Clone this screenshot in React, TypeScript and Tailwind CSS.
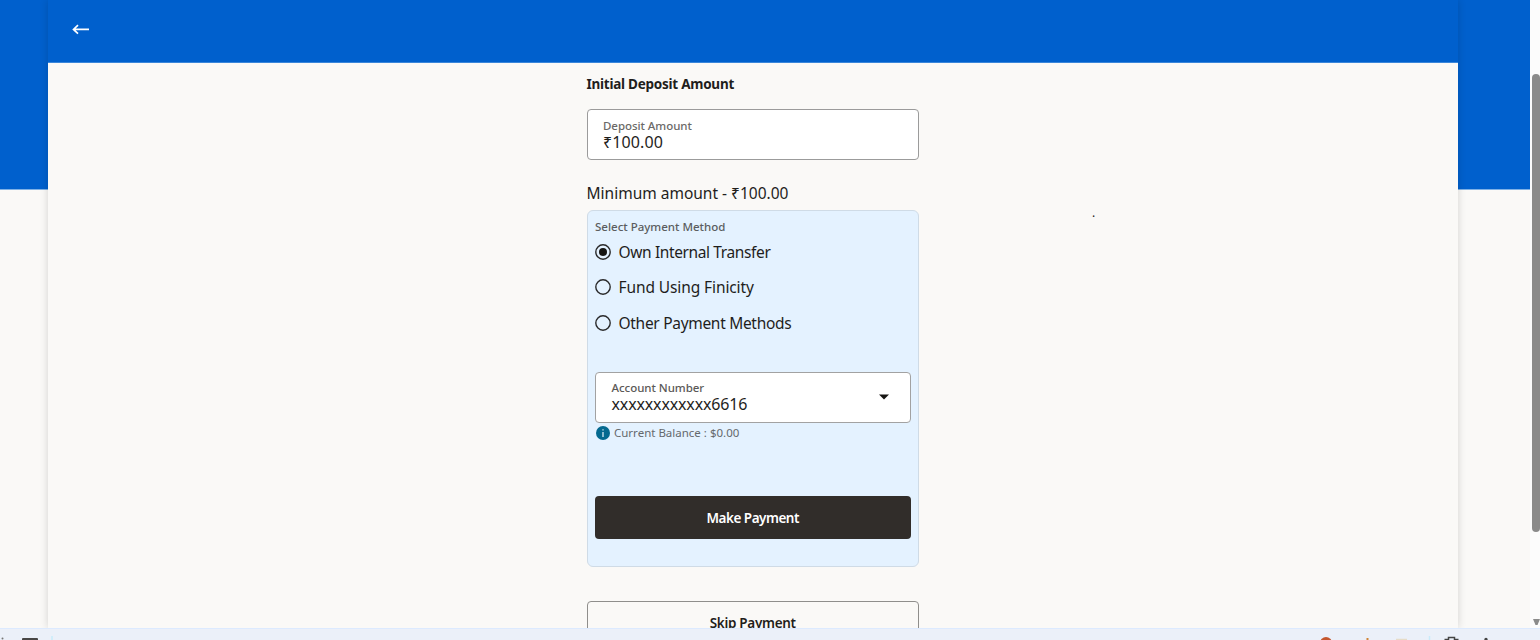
import { useState } from 'react'

interface PaymentOption {
  id: string
  label: string
  className: string
}

const paymentOptions: PaymentOption[] = [
  { id: 'internal', label: 'Own Internal Transfer', className: 'tracking-[-0.38px]' },
  { id: 'finicity', label: 'Fund Using Finicity', className: 'tracking-[-0.1px]' },
  { id: 'other', label: 'Other Payment Methods', className: 'tracking-[-0.3px]' },
]

function SideRail({ className }: { className: string }) {
  return (
    <div className={`shrink-0 ${className}`}>
      <div className="h-[190px] bg-[#0060cd] border-b border-[#7fb1e6]" />
    </div>
  )
}

function Header() {
  return (
    <header className="h-[63px] shrink-0 bg-[#0060cd] border-b border-[#3a86da] pl-6 pt-[21px]">
      <button type="button" aria-label="Back" className="block">
        <svg className="w-[18px] h-4" viewBox="0 0 18 16" fill="none" stroke="#fff" strokeWidth="1.7">
          <path d="M17 8.4H1.8M6 4.2L1.5 8.4 6 12.6" />
        </svg>
      </button>
    </header>
  )
}

function RadioRow({ option, checked, onSelect }: { option: PaymentOption; checked: boolean; onSelect: () => void }) {
  return (
    <button type="button" role="radio" aria-checked={checked} onClick={onSelect} className="flex items-center gap-[7.5px] h-[35.5px]">
      <svg className="w-4 h-4 shrink-0" viewBox="0 0 16 16" aria-hidden="true">
        <circle cx="8" cy="8" r="7.2" fill="none" stroke="#2a2a2b" strokeWidth="1.4" />
        {checked && <circle cx="8" cy="8" r="4" fill="#161513" />}
      </svg>
      <span className={`text-[15.5px] leading-5 whitespace-nowrap ${option.className}`}>{option.label}</span>
    </button>
  )
}

function PaymentCard() {
  const [selected, setSelected] = useState('internal')

  return (
    <section className="h-[357px] bg-[#e4f2ff] border border-[#cfdbe6] rounded-md px-[7.5px] pt-2 flex flex-col">
      <div className="text-[11.5px] leading-4 font-medium text-[#5b5d60]">Select Payment Method</div>
      <div role="radiogroup" className="flex flex-col items-start h-[138px] -mt-px">
        {paymentOptions.map((option) => (
          <RadioRow
            key={option.id}
            option={option}
            checked={selected === option.id}
            onSelect={() => setSelected(option.id)}
          />
        ))}
      </div>

      <div className="h-[51px] shrink-0 bg-white border border-[#a2a2a2] rounded-[4px] pl-[15.5px] pr-[21px] pb-[2px] flex items-center justify-between">
        <div className="-mt-px">
          <div className="text-[11.5px] leading-4 font-medium tracking-[-0.05px] text-[#5b5957]">Account Number</div>
          <div className="text-[16px] leading-4 tracking-[-0.15px]">xxxxxxxxxxxx6616</div>
        </div>
        <svg className="w-[10px] h-[6px]" viewBox="0 0 10 6" aria-hidden="true">
          <path d="M0 .5H10L5 5.5Z" fill="#161513" />
        </svg>
      </div>

      <div className="flex items-center gap-1 mt-[2px] pl-px h-4">
        <svg className="w-[14px] h-[14px]" viewBox="0 0 14 14" aria-hidden="true">
          <circle cx="7" cy="7" r="7" fill="#04698f" />
          <path d="M7 3.2v1.4M7 6v5" stroke="#d5e8f2" strokeWidth="1.3" />
        </svg>
        <span className="text-[11.5px] leading-4 text-[#65696d]">Current Balance : $0.00</span>
      </div>

      <button
        type="button"
        className="mt-[55px] h-[43px] shrink-0 rounded-[4px] bg-[#312d2a] text-white text-[13.5px] leading-5 font-semibold tracking-[-0.5px]"
      >
        Make Payment
      </button>
    </section>
  )
}

function DepositForm() {
  return (
    <main className="flex flex-col w-[332.5px] ml-[538.5px] pt-[11px]">
      <h2 className="text-[13.5px] leading-5 font-bold tracking-[-0.25px]">Initial Deposit Amount</h2>
      <div className="mt-[15px] h-[51px] shrink-0 bg-white border border-[#9b9b9b] rounded-[4px] pl-[15.5px] pt-2">
        <div className="text-[11.5px] leading-4 font-medium tracking-[-0.05px] text-[#6b6967]">Deposit Amount</div>
        <div className="text-[16px] leading-4 tracking-[0.1px]">₹100.00</div>
      </div>
      <p className="mt-[23px] mb-[7px] text-[15.5px] leading-5">Minimum amount - ₹100.00</p>
      <PaymentCard />
      <button
        type="button"
        className="mt-[34px] h-[43px] shrink-0 rounded-[4px] border border-[#8f8e8c] text-[13.5px] leading-5 font-semibold tracking-[-0.3px]"
      >
        Skip Payment
      </button>
    </main>
  )
}

function Scrollbar() {
  return (
    <div className="w-[10px] shrink-0 bg-[#fcfcfc] flex flex-col items-end justify-between pt-[74px] pb-[3px]">
      <div className="w-2 h-[458px] rounded-full bg-[#8b8b8b]" />
      <svg className="w-[7px] h-[6px]" viewBox="0 0 7 6" aria-hidden="true">
        <path d="M0 0H7L4.5 6H2.5Z" fill="#8b8b8b" />
      </svg>
    </div>
  )
}

function Taskbar() {
  return (
    <footer className="h-3 shrink-0 bg-[#ebf0f9] border-t border-[#dceaff]">
      <svg className="block w-full h-[11px]" viewBox="0 0 1540 11" aria-hidden="true">
        <circle cx="2.5" cy="9.5" r="1" fill="#777" />
        <rect x="22" y="9" width="16" height="4" rx="1" fill="#484746" />
        <path d="M52 7v4M1429.5 7v4" stroke="#c9ebfa" strokeWidth="1.5" />
        <circle cx="1326" cy="14" r="6" fill="#c4562d" />
        <path d="M1367.5 9v3" stroke="#d08536" strokeWidth="2" />
        <path d="M1396 10.5h11" stroke="#e6dcc8" strokeWidth="1.5" />
        <path d="M1444.5 10.5h4V8.5h6v2h4" fill="none" stroke="#444" strokeWidth="1.5" />
        <circle cx="1486" cy="10.5" r="1.7" fill="#444" />
      </svg>
    </footer>
  )
}

export default function App() {
  return (
    <div className="h-[640px] w-full flex flex-col overflow-hidden bg-[#faf9f7] text-[#1f1e1c] font-['Noto_Sans',sans-serif]">
      <div className="flex h-[628px] shrink-0 overflow-hidden">
        <SideRail className="w-12" />
        <div className="relative w-[1410px] shrink-0 bg-[#faf9f7] flex flex-col shadow-[0_0_8px_rgba(0,0,0,0.16)]">
          <Header />
          <DepositForm />
          {/* stray full stop right of the form */}
          <span className="absolute left-[1044px] top-[205px] text-[12px] leading-4">.</span>
        </div>
        <SideRail className="w-[72px]" />
        <Scrollbar />
      </div>
      <Taskbar />
    </div>
  )
}
